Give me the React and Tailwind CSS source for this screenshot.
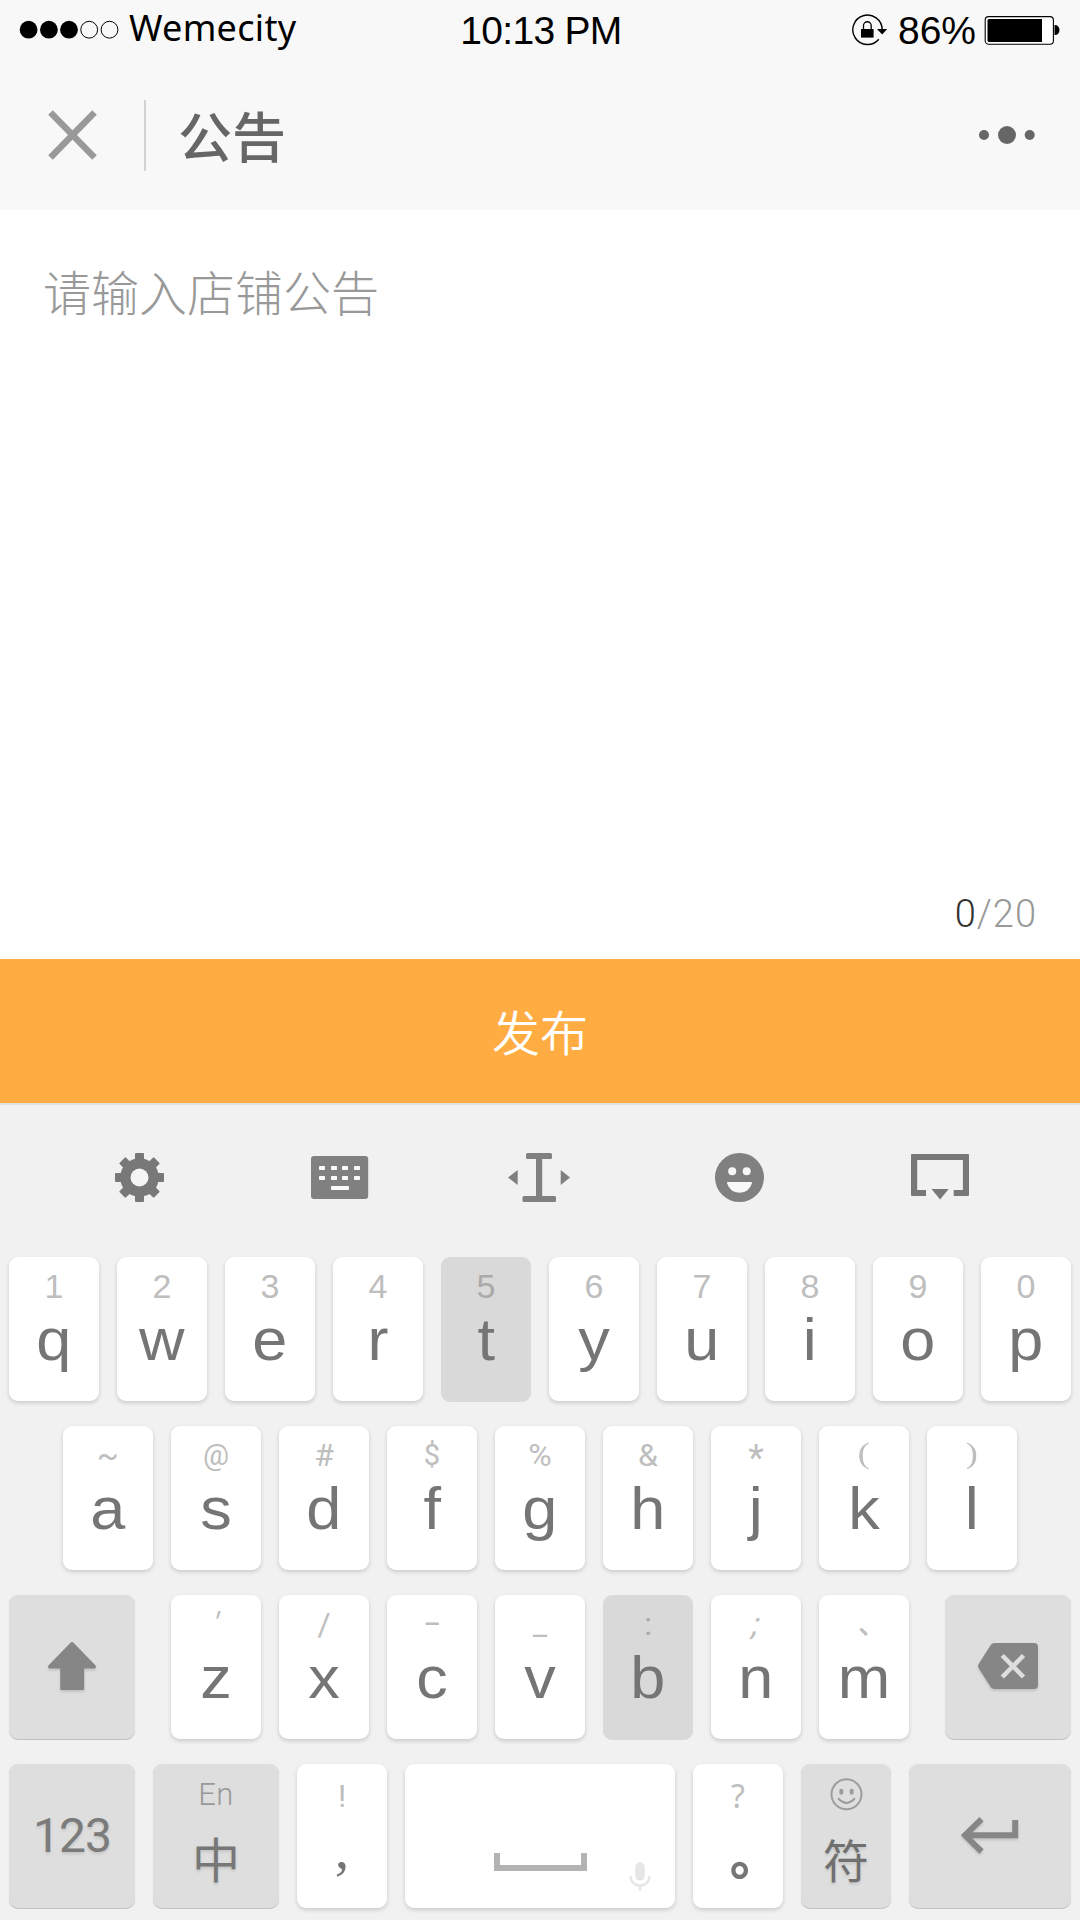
import React from "react";

const ARIAL = "font-['Liberation_Sans',Arial,sans-serif]";
const CJK = "font-['Noto_Sans_CJK_SC',sans-serif]";

function StatusBar() {
  return (
    <div className="flex h-[60px] items-start text-black">
      <div className="flex w-[380px] items-start">
        <svg className="ml-[18px] mt-[20px]" width="102" height="20" viewBox="0 0 102 20">
          <circle cx="10.6" cy="9.7" r="8.9" />
          <circle cx="30.9" cy="9.7" r="8.9" />
          <circle cx="51" cy="9.7" r="8.9" />
          <circle cx="71.2" cy="9.7" r="8.4" fill="none" stroke="#000" strokeWidth="1" />
          <circle cx="91.5" cy="9.7" r="8.4" fill="none" stroke="#000" strokeWidth="1" />
        </svg>
        <span className="ml-[9px] mt-px font-['Noto_Sans',sans-serif] text-[36px] leading-[54px] tracking-[0.3px]">Wemecity</span>
      </div>
      <div className={`${ARIAL} mt-[9px] w-[322px] text-center text-[39px] leading-[44px] tracking-[-0.7px]`}>10:13 PM</div>
      <div className="flex flex-1 items-start justify-end pr-[20px]">
        <svg className="mt-[13px]" width="37" height="34" viewBox="0 0 37 34">
          <path d="M31.2 16.5A14.7 14.7 0 1 0 27.8 26.2" fill="none" stroke="#000" strokeWidth="1.4" />
          <path d="M26 16h10.2l-5 5.6z" />
          <path d="M10 16h12.6v8.6H10z" />
          <path d="M12.5 16v-3.4a3.8 3.8 0 0 1 7.7 0V16" fill="none" stroke="#000" strokeWidth="1.3" />
        </svg>
        <span className={`${ARIAL} ml-[10px] mt-[9px] text-[39px] leading-[44px]`}>86%</span>
        <svg className="ml-[8px] mt-[15px]" width="76" height="31" viewBox="0 0 76 31">
          <rect x="1.2" y="1.6" width="68.2" height="27.6" rx="3.5" fill="#fff" stroke="#000" strokeWidth="1.1" />
          <path d="M5 4H58v23H5a1.5 1.5 0 0 1-1.5-1.5v-20A1.5 1.5 0 0 1 5 4z" />
          <path d="M70.5 10c3.3 0 5 2 5 5s-1.7 5-5 5z" />
        </svg>
      </div>
    </div>
  );
}

function NavBar() {
  return (
    <div className="flex h-[150px] items-center pl-[48px] pr-[45px]">
      <svg width="50" height="50" viewBox="0 0 50 50">
        <path d="M2.5 2.500L46.500 47.500M46.500 2.500L2.500 47.500" stroke="#999" strokeWidth="6.500" />
      </svg>
      <div className="ml-[46px] h-[71px] w-[2px] bg-[#d2d2d2]" />
      <h1 className={`${CJK} ml-[32px] text-[54px] font-medium leading-[60px] text-[#666]`}>公告</h1>
      <svg className="ml-auto" width="57" height="20" viewBox="0 0 57 20">
        <g fill="#666">
          <circle cx="6" cy="10" r="5" />
          <circle cx="29" cy="10" r="9" />
          <circle cx="51.700" cy="10" r="5" />
        </g>
      </svg>
    </div>
  );
}

const teeth = [0, 45, 90, 135, 180, 225, 270, 315];

function Toolbar() {
  const cls = "mx-auto block";
  return (
    <div className="grid h-[152px] grid-cols-5 px-[40px] pt-[48px]">
      <svg className={cls} width="70" height="50" viewBox="0 0 70 50" fill="#787878">
        {teeth.map((a) => (
          <rect key={a} x="30" y="0" width="9" height="10" rx="1" transform={`rotate(${a} 34.500 24.500)`} />
        ))}
        <circle cx="34.500" cy="24.500" r="19.300" />
        <circle cx="34.500" cy="24.500" r="9" fill="#f5f5f5" />
      </svg>
      <svg className={cls} width="70" height="50" viewBox="0 0 70 50" fill="#808080">
        <rect x="6" y="3" width="57.200" height="43" rx="3" />
        <g fill="#fafafa">
          {[14, 26, 37, 49].map((x) => (
            <React.Fragment key={x}>
              <rect x={x} y="13" width="6" height="4" rx="0.800" />
              <rect x={x} y="23" width="6" height="4" rx="0.800" />
            </React.Fragment>
          ))}
          <rect x="26" y="33" width="18" height="4" rx="0.800" />
        </g>
      </svg>
      <svg className={cls} width="70" height="50" viewBox="0 0 70 50" fill="#808080">
        <path d="M3 24.500L12.700 17v15zM65 24.500L55.700 17v15z" />
        <rect x="31" y="2" width="6.200" height="45" />
        <rect x="21" y="0" width="26" height="6" rx="1.500" />
        <rect x="17.500" y="43" width="33.500" height="6" rx="1.500" />
      </svg>
      <svg className={cls} width="70" height="50" viewBox="0 0 70 50" fill="#808080">
        <circle cx="34.500" cy="24.500" r="24.500" />
        <g fill="#f8f8f8">
          <circle cx="27.200" cy="18.200" r="4" />
          <circle cx="41.700" cy="18.200" r="4" />
          <path d="M22.800 29h23.400q1 0 .7 1.200a12.800 12.800 0 0 1-24.800 0Q21.800 29 22.800 29z" />
        </g>
      </svg>
      <svg className={cls} width="70" height="50" viewBox="0 0 70 50" fill="#787878">
        <path d="M7 1H63a1 1 0 0 1 1 1V42a1 1 0 0 1-1 1H48.700V37H57.900V7H12.200V37H21V43H7a1 1 0 0 1-1-1V2a1 1 0 0 1 1-1z" />
        <path d="M26.500 36h17.200l-8.600 10.500z" />
      </svg>
    </div>
  );
}

const WHITE = "bg-white shadow-[0_2px_4px_rgba(0,0,0,0.16)]";
const PRESSED = "bg-[#d9d9d9] shadow-[0_1px_0_#d9d9d9]";
const GREY = "bg-[#dedede] shadow-[0_1px_0_#c0c0c0,0_0_2px_rgba(0,0,0,0.06)]";

const HINT = {
  digit: "font-['Liberation_Sans',Arial,sans-serif] text-[34px]",
  roboto: "font-['Roboto',sans-serif] text-[32px]",
  at: "font-['Roboto',sans-serif] text-[29px]",
  star: "font-['Roboto',sans-serif] text-[36px] pt-[3px]",
  slanted: "font-['Roboto',sans-serif] text-[32px] -skew-x-[16deg]",
  paren: "font-['Liberation_Serif',serif] text-[29px] scale-x-125 -mt-[2px] mb-[2px]",
  pause: "font-['Noto_Sans_CJK_SC',sans-serif] font-medium text-[28px] pl-[16px] -mt-[2px] mb-[2px]",
};

function Key({ hint, main, kind = "roboto", pressed = false }) {
  return (
    <div className={`flex h-[144px] w-[90px] flex-col items-center rounded-[9px] pt-[9px] ${pressed ? PRESSED : WHITE}`}>
      <span className={`h-[40px] leading-[40px] ${HINT[kind]} ${pressed ? "text-[#aaaaaa]" : "text-[#bebebe]"}`}>{hint}</span>
      <span className={`${ARIAL} mt-[4px] scale-x-105 text-[60px] leading-[60px] text-[#757575]`}>{main}</span>
    </div>
  );
}

const row1 = ["q", "w", "e", "r", "t", "y", "u", "i", "o", "p"];
const row2 = [
  ["~", "a"],
  ["@", "s", "at"],
  ["#", "d"],
  ["$", "f", "at"],
  ["%", "g"],
  ["&", "h"],
  ["*", "j", "star"],
  ["(", "k", "paren"],
  [")", "l", "paren"],
];
const row3 = [
  ["'", "z", "slanted"],
  ["/", "x"],
  ["−", "c"],
  ["_", "v"],
  [":", "b"],
  [";", "n", "slanted"],
  ["、", "m", "pause"],
];

function Keyboard() {
  return (
    <div className="flex flex-col gap-[25px] px-[9px] pb-[12px]">
      <div className="flex gap-[18px]">
        {row1.map((k, i) => (
          <Key key={k} hint={(i + 1) % 10} main={k} kind="digit" pressed={k === "t"} />
        ))}
      </div>
      <div className="flex justify-center gap-[18px]">
        {row2.map(([h, k, kind]) => (
          <Key key={k} hint={h} main={k} kind={kind} />
        ))}
      </div>
      <div className="flex justify-between">
        <div className={`flex h-[144px] w-[126px] items-center justify-center rounded-[9px] ${GREY}`}>
          <svg className="-mt-[2px] drop-shadow-[0_2px_1px_rgba(0,0,0,0.12)]" width="48" height="48" viewBox="0 0 48 48" fill="#868686">
            <path d="M22.500.7q1.500-1.300 3 0L47.600 23.600q1 2.500-1 2.900H36.200V46.500a1.800 1.800 0 0 1-1.800 1.800H14a1.800 1.800 0 0 1-1.800-1.800V26.500H1.400q-2-.4-1-2.900z" />
          </svg>
        </div>
        <div className="flex gap-[18px]">
          {row3.map(([h, k, kind]) => (
            <Key key={k} hint={h} main={k} kind={kind} pressed={k === "b"} />
          ))}
        </div>
        <div className={`flex h-[144px] w-[126px] items-center justify-center rounded-[9px] ${GREY}`}>
          <svg className="-mt-[2px] drop-shadow-[0_2px_1px_rgba(0,0,0,0.12)]" width="60" height="46" viewBox="0 0 60 46">
            <path d="M16.500 0H56a4 4 0 0 1 4 4V42a4 4 0 0 1-4 4H16.500q-2.500 0-3.800-2L.6 25q-1-2 0-4L12.700 2Q14 0 16.500 0z" fill="#868686" />
            <path d="M24.300 12.500L45.500 34M45.500 12.500L24.300 34" stroke="#dedede" strokeWidth="4.600" />
          </svg>
        </div>
      </div>
      <div className="flex gap-[18px]">
        <div className={`flex h-[144px] w-[126px] items-center justify-center rounded-[9px] ${GREY}`}>
          <span className="font-['Roboto',sans-serif] text-[48px] leading-[56px] tracking-[-1px] text-[#7b7b7b] [text-shadow:0_2px_3px_rgba(0,0,0,0.12)]">123</span>
        </div>
        <div className={`flex h-[144px] w-[126px] flex-col items-center rounded-[9px] pt-[11px] ${GREY}`}>
          <span className="font-['Roboto',sans-serif] text-[31px] font-light leading-[40px] tracking-[0.500px] text-[#999]">En</span>
          <span className={`${CJK} mt-[14px] text-[48px] leading-[56px] text-[#777] [text-shadow:0_2px_3px_rgba(0,0,0,0.12)]`}>中</span>
        </div>
        <div className={`flex h-[144px] w-[90px] flex-col items-center rounded-[9px] pt-[12px] ${WHITE}`}>
          <span className="font-['Roboto',sans-serif] text-[32px] leading-[40px] text-[#bebebe]">!</span>
          <span className="mt-[3px] font-['Liberation_Serif',serif] text-[58px] leading-[60px] text-[#757575]">,</span>
        </div>
        <div className={`flex h-[144px] w-[270px] items-start rounded-[9px] ${WHITE}`}>
          <svg className="ml-[89px] mt-[89px]" width="93" height="18" viewBox="0 0 93 18">
            <path d="M3 0V15H90V0" fill="none" stroke="#b3b3b3" strokeWidth="6" />
          </svg>
          <svg className="ml-[42px] mt-[98px]" width="22" height="30" viewBox="0 0 22 30">
            <rect x="6.300" y="0.300" width="9.400" height="18.300" rx="4.700" fill="#e6e6e6" />
            <path d="M1.500 14.200a9.500 9.500 0 0 0 19 0M11 23.500V29" fill="none" stroke="#e6e6e6" strokeWidth="2.400" />
          </svg>
        </div>
        <div className={`flex h-[144px] w-[90px] flex-col items-center rounded-[9px] pt-[12px] ${WHITE}`}>
          <span className="font-['Noto_Sans',sans-serif] text-[32px] leading-[40px] text-[#bebebe]">?</span>
          <span className={`${CJK} ml-[34px] mt-[10px] text-[50px] font-black leading-[52px] text-[#757575]`}>。</span>
        </div>
        <div className={`flex h-[144px] w-[90px] flex-col items-center rounded-[9px] pt-[14px] ${GREY}`}>
          <svg width="33" height="33" viewBox="0 0 33 33" fill="none" stroke="#9c9ca0" strokeWidth="2">
            <circle cx="16.500" cy="16.300" r="15" />
            <path d="M8.600 20.800q7.900 8.200 15.800 0" strokeLinecap="round" />
            <path d="M11.300 12.800v2M21.700 12.800v2" strokeWidth="4" strokeLinecap="round" />
          </svg>
          <span className={`${CJK} mt-[19px] text-[46px] leading-[56px] text-[#707070] [text-shadow:0_2px_3px_rgba(0,0,0,0.12)]`}>符</span>
        </div>
        <div className={`flex h-[144px] w-[162px] items-center justify-center rounded-[9px] ${GREY}`}>
          <svg className="-mt-[2px] drop-shadow-[0_2px_1px_rgba(0,0,0,0.12)]" width="58" height="37" viewBox="0 0 58 37" fill="none" stroke="#868686" strokeWidth="6">
            <path d="M54.200 3V18.300H5" />
            <path d="M20.500 2.200L4 18.300L20.500 34.500" />
          </svg>
        </div>
      </div>
    </div>
  );
}

export default function App() {
  return (
    <div className="flex h-[1920px] w-[1080px] flex-col overflow-hidden bg-white">
      <header className="h-[210px] bg-[#f8f8f8]">
        <StatusBar />
        <NavBar />
      </header>
      <main className="flex h-[749px] flex-col justify-between px-[43px] pt-[45px] pb-[19px]">
        <p className={`${CJK} text-[48px] font-light leading-[70px] text-[#999]`}>请输入店铺公告</p>
        <p className="text-right font-['Roboto',sans-serif] text-[38px] font-light leading-[52px] tracking-[1px] text-[#999]">
          <span className="text-[#333]">0</span>/20
        </p>
      </main>
      <button className={`${CJK} h-[144px] bg-[#ffac42] pb-[2px] text-[48px] font-[350] leading-[60px] text-white`}>发布</button>
      <section className="border-t-2 border-[#e2e2e2] bg-[#f1f1f1]">
        <Toolbar />
        <Keyboard />
      </section>
    </div>
  );
}
